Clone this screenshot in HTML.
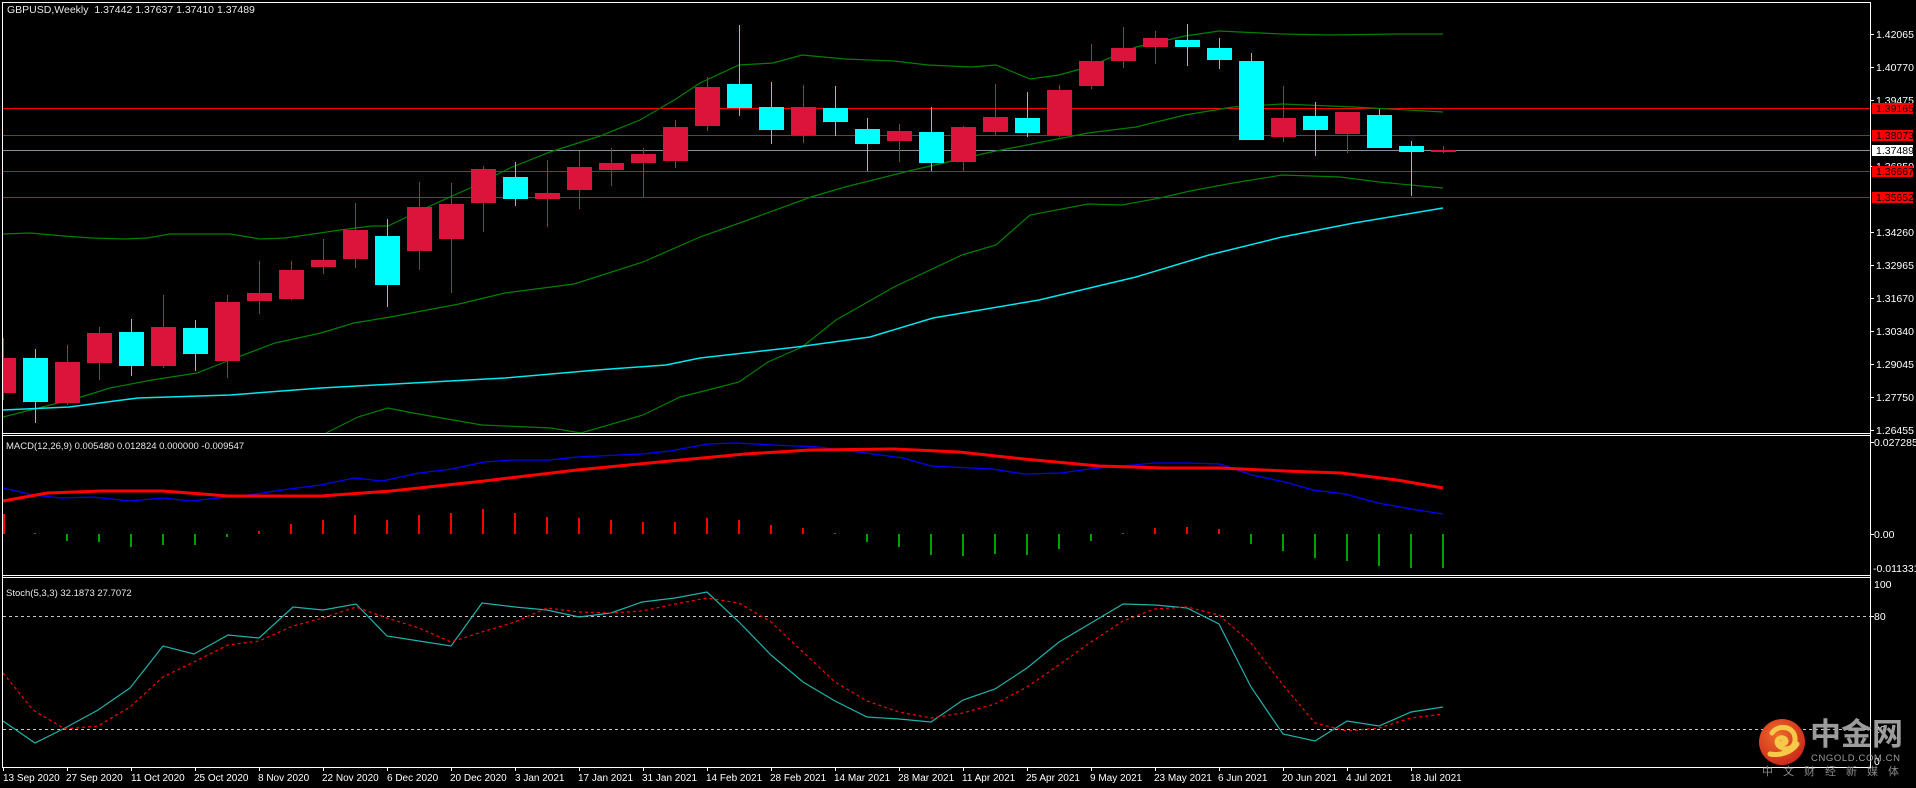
<!DOCTYPE html>
<html><head><meta charset="utf-8"><style>
html,body{margin:0;padding:0;background:#000;width:1916px;height:788px;overflow:hidden}
svg{display:block}
text{font-family:"Liberation Sans","Noto Sans CJK SC",sans-serif}
</style></head><body>
<svg width="1916" height="788" viewBox="0 0 1916 788" xmlns="http://www.w3.org/2000/svg">
<rect width="1916" height="788" fill="#000"/>
<defs>
<clipPath id="cm"><rect x="3" y="3" width="1867" height="430"/></clipPath>
<clipPath id="cs"><rect x="3" y="578" width="1867" height="189"/></clipPath>
<radialGradient id="lg" cx="0.4" cy="0.35" r="0.7"><stop offset="0" stop-color="#f06a2a"/><stop offset="1" stop-color="#c8281a"/></radialGradient>
</defs>
<!-- panel borders -->
<g fill="none" stroke="#fff" stroke-width="1" shape-rendering="crispEdges">
<line x1="2" y1="2.5" x2="1871" y2="2.5"/>
<line x1="2.5" y1="2" x2="2.5" y2="768"/>
<line x1="1870.5" y1="2" x2="1870.5" y2="768"/>
<line x1="2" y1="433.5" x2="1871" y2="433.5"/>
<line x1="2" y1="435.5" x2="1871" y2="435.5"/>
<line x1="2" y1="575.5" x2="1871" y2="575.5"/>
<line x1="2" y1="577.5" x2="1871" y2="577.5"/>
<line x1="2" y1="767.5" x2="1871" y2="767.5"/>
</g>
<!-- main chart -->
<g clip-path="url(#cm)">
<g shape-rendering="crispEdges">
<line x1="3" y1="108.5" x2="1870" y2="108.5" stroke="#ff0000"/>
<line x1="3" y1="135.5" x2="1870" y2="135.5" stroke="#ff0000"/>
<line x1="3" y1="150.5" x2="1870" y2="150.5" stroke="#8090a0"/>
<line x1="3" y1="171.5" x2="1870" y2="171.5" stroke="#ff0000"/>
<line x1="3" y1="197.5" x2="1870" y2="197.5" stroke="#ff0000"/>
</g>
<g fill="none" stroke="#008000" stroke-width="1.2">
<polyline points="3,234 30,233 64,236 92,238 125,239 147,238 170,234 230,234 260,239 285,238 320,233 340,230 372,226 388,226 430,206 470,188 510,168 550,152 600,136 640,120 676,99 700,83 739,65 773,63 802,55 845,59 894,61 928,65 971,67 996,65 1030,79 1059,75 1088,67 1136,47 1185,36 1219,31 1282,34 1330,35 1398,34 1443,34"/>
<polyline points="3,417 78,398 110,388 152,380 197,373 230,360 275,343 321,333 354,323 390,317 459,304 505,293 574,284 643,262 700,237 748,220 811,197 845,187 913,170 991,152 1088,133 1136,127 1185,115 1233,107 1282,104 1354,107 1443,112"/>
<polyline points="326,433 358,417 388,408 413,413 482,425 551,428 581,433 643,415 680,397 700,392 739,382 768,362 802,347 836,320 894,287 962,255 996,245 1030,215 1088,204 1122,205 1160,198 1190,191 1233,183 1282,175 1340,177 1379,182 1443,188"/>
</g>
<polyline fill="none" stroke="#00e8f0" stroke-width="1.5" points="3,410 69,407 138,398 230,395 321,388 413,383 505,378 597,370 666,365 700,358 797,347 870,337 933,318 1039,300 1136,277 1209,255 1282,237 1354,223 1443,208"/>
<g shape-rendering="crispEdges" id="candles"></g>
</g>
<!-- candles -->
<g shape-rendering="crispEdges" clip-path="url(#cm)">
<g fill="#dc143c">
<rect x="3" y="338" width="1" height="62"/><rect x="-9" y="358" width="25" height="35"/>
<rect x="67" y="345" width="1" height="60"/><rect x="55" y="362" width="25" height="41"/>
<rect x="99" y="327" width="1" height="53"/><rect x="87" y="333" width="25" height="30"/>
<rect x="163" y="295" width="1" height="73"/><rect x="151" y="327" width="25" height="39"/>
<rect x="227" y="295" width="1" height="83"/><rect x="215" y="302" width="25" height="59"/>
<rect x="259" y="261" width="1" height="53"/><rect x="247" y="293" width="25" height="8"/>
<rect x="291" y="261" width="1" height="39"/><rect x="279" y="270" width="25" height="29"/>
<rect x="323" y="239" width="1" height="35"/><rect x="311" y="260" width="25" height="7"/>
<rect x="355" y="203" width="1" height="65"/><rect x="343" y="230" width="25" height="29"/>
<rect x="419" y="182" width="1" height="88"/><rect x="407" y="207" width="25" height="44"/>
<rect x="451" y="183" width="1" height="110"/><rect x="439" y="204" width="25" height="35"/>
<rect x="483" y="166" width="1" height="66"/><rect x="471" y="169" width="25" height="34"/>
<rect x="547" y="160" width="1" height="67"/><rect x="535" y="193" width="25" height="6"/>
<rect x="579" y="151" width="1" height="58"/><rect x="567" y="167" width="25" height="23"/>
<rect x="611" y="148" width="1" height="38"/><rect x="599" y="163" width="25" height="7"/>
<rect x="643" y="148" width="1" height="49"/><rect x="631" y="154" width="25" height="9"/>
<rect x="675" y="120" width="1" height="48"/><rect x="663" y="127" width="25" height="34"/>
<rect x="707" y="77" width="1" height="54"/><rect x="695" y="87" width="25" height="39"/>
<rect x="803" y="85" width="1" height="58"/><rect x="791" y="107" width="25" height="28"/>
<rect x="899" y="124" width="1" height="38"/><rect x="887" y="131" width="25" height="10"/>
<rect x="963" y="126" width="1" height="45"/><rect x="951" y="127" width="25" height="35"/>
<rect x="995" y="84" width="1" height="51"/><rect x="983" y="117" width="25" height="15"/>
<rect x="1059" y="85" width="1" height="52"/><rect x="1047" y="90" width="25" height="45"/>
<rect x="1091" y="44" width="1" height="45"/><rect x="1079" y="61" width="25" height="25"/>
<rect x="1123" y="27" width="1" height="41"/><rect x="1111" y="48" width="25" height="13"/>
<rect x="1155" y="31" width="1" height="33"/><rect x="1143" y="38" width="25" height="9"/>
<rect x="1283" y="86" width="1" height="56"/><rect x="1271" y="118" width="25" height="19"/>
<rect x="1347" y="112" width="1" height="41"/><rect x="1335" y="112" width="25" height="22"/>
<rect x="1443" y="146" width="1" height="7"/><rect x="1431" y="150" width="25" height="2"/>
</g>
<g fill="#00ffff">
<rect x="35" y="349" width="1" height="74"/><rect x="23" y="358" width="25" height="44"/>
<rect x="131" y="319" width="1" height="57"/><rect x="119" y="332" width="25" height="34"/>
<rect x="195" y="320" width="1" height="51"/><rect x="183" y="328" width="25" height="26"/>
<rect x="387" y="219" width="1" height="88"/><rect x="375" y="236" width="25" height="49"/>
<rect x="515" y="162" width="1" height="44"/><rect x="503" y="177" width="25" height="22"/>
<rect x="739" y="25" width="1" height="91"/><rect x="727" y="84" width="25" height="24"/>
<rect x="771" y="82" width="1" height="62"/><rect x="759" y="107" width="25" height="23"/>
<rect x="835" y="86" width="1" height="50"/><rect x="823" y="108" width="25" height="14"/>
<rect x="867" y="118" width="1" height="53"/><rect x="855" y="129" width="25" height="15"/>
<rect x="931" y="107" width="1" height="64"/><rect x="919" y="132" width="25" height="31"/>
<rect x="1027" y="92" width="1" height="45"/><rect x="1015" y="118" width="25" height="15"/>
<rect x="1187" y="24" width="1" height="42"/><rect x="1175" y="40" width="25" height="7"/>
<rect x="1219" y="38" width="1" height="31"/><rect x="1207" y="48" width="25" height="12"/>
<rect x="1251" y="53" width="1" height="87"/><rect x="1239" y="61" width="25" height="79"/>
<rect x="1315" y="102" width="1" height="54"/><rect x="1303" y="116" width="25" height="14"/>
<rect x="1379" y="109" width="1" height="39"/><rect x="1367" y="115" width="25" height="33"/>
<rect x="1411" y="141" width="1" height="55"/><rect x="1399" y="146" width="25" height="6"/>
</g>
</g>
<text x="7" y="13" font-size="10.5" fill="#e8e8e8">GBPUSD,Weekly&#160;&#160;1.37442 1.37637 1.37410 1.37489</text>
<!-- right price scale -->
<g font-size="10.5" fill="#ffffff" shape-rendering="crispEdges">
<g stroke="#fff"><line x1="1871" y1="34.5" x2="1874" y2="34.5"/><line x1="1871" y1="67.5" x2="1874" y2="67.5"/><line x1="1871" y1="100.5" x2="1874" y2="100.5"/><line x1="1871" y1="166.5" x2="1874" y2="166.5"/><line x1="1871" y1="232.5" x2="1874" y2="232.5"/><line x1="1871" y1="265.5" x2="1874" y2="265.5"/><line x1="1871" y1="298.5" x2="1874" y2="298.5"/><line x1="1871" y1="331.5" x2="1874" y2="331.5"/><line x1="1871" y1="364.5" x2="1874" y2="364.5"/><line x1="1871" y1="397.5" x2="1874" y2="397.5"/><line x1="1871" y1="430.5" x2="1874" y2="430.5"/>
<line x1="1871" y1="442.5" x2="1874" y2="442.5"/><line x1="1871" y1="534.5" x2="1874" y2="534.5"/><line x1="1871" y1="616.5" x2="1874" y2="616.5"/></g>
<text x="1876" y="38">1.42065</text>
<text x="1876" y="71">1.40770</text>
<text x="1876" y="104">1.39475</text>
<text x="1876" y="170">1.36850</text>
<text x="1876" y="236">1.34260</text>
<text x="1876" y="269">1.32965</text>
<text x="1876" y="302">1.31670</text>
<text x="1876" y="335">1.30340</text>
<text x="1876" y="368">1.29045</text>
<text x="1876" y="401">1.27750</text>
<text x="1876" y="434">1.26455</text>
<rect x="1872" y="103" width="41" height="11" fill="#ff0000"/><text x="1876" y="112" fill="#000">1.39165</text>
<rect x="1872" y="130" width="41" height="11" fill="#ff0000"/><text x="1876" y="139" fill="#000">1.38073</text>
<rect x="1872" y="145" width="41" height="11" fill="#ffffff"/><text x="1876" y="154" fill="#000">1.37489</text>
<rect x="1872" y="166" width="41" height="11" fill="#ff0000"/><text x="1876" y="175" fill="#000">1.36667</text>
<rect x="1872" y="192" width="41" height="11" fill="#ff0000"/><text x="1876" y="201" fill="#000">1.35652</text>
<text x="1874" y="446">0.027285</text>
<text x="1874" y="538">0.00</text>
<text x="1873" y="572">-0.011331</text>
<text x="1874" y="588">100</text>
<text x="1874" y="620">80</text>
<text x="1874" y="733">20</text>
<text x="1874" y="765">0</text>
</g>
<!-- MACD -->
<text x="6" y="449" font-size="9.5" fill="#e8e8e8">MACD(12,26,9) 0.005480 0.012824 0.000000 -0.009547</text>
<g shape-rendering="crispEdges" stroke-width="2">
<g stroke="#ff0000">
<line x1="4" y1="534" x2="4" y2="514"/><line x1="35" y1="534" x2="35" y2="533"/>
<line x1="259" y1="534" x2="259" y2="531"/><line x1="291" y1="534" x2="291" y2="524"/><line x1="323" y1="534" x2="323" y2="520"/><line x1="355" y1="534" x2="355" y2="515"/><line x1="387" y1="534" x2="387" y2="520"/><line x1="419" y1="534" x2="419" y2="515"/><line x1="451" y1="534" x2="451" y2="513"/><line x1="483" y1="534" x2="483" y2="509"/><line x1="515" y1="534" x2="515" y2="513"/><line x1="547" y1="534" x2="547" y2="517"/><line x1="579" y1="534" x2="579" y2="518"/><line x1="611" y1="534" x2="611" y2="520"/><line x1="643" y1="534" x2="643" y2="522"/><line x1="675" y1="534" x2="675" y2="522"/><line x1="707" y1="534" x2="707" y2="518"/><line x1="739" y1="534" x2="739" y2="520"/><line x1="771" y1="534" x2="771" y2="525"/><line x1="803" y1="534" x2="803" y2="528"/><line x1="835" y1="534" x2="835" y2="533"/>
<line x1="1123" y1="534" x2="1123" y2="533"/><line x1="1155" y1="534" x2="1155" y2="528"/><line x1="1187" y1="534" x2="1187" y2="527"/><line x1="1219" y1="534" x2="1219" y2="529"/>
</g>
<g stroke="#00a000">
<line x1="67" y1="534" x2="67" y2="541"/><line x1="99" y1="534" x2="99" y2="542"/><line x1="131" y1="534" x2="131" y2="547"/><line x1="163" y1="534" x2="163" y2="545"/><line x1="195" y1="534" x2="195" y2="545"/><line x1="227" y1="534" x2="227" y2="537"/>
<line x1="867" y1="534" x2="867" y2="542"/><line x1="899" y1="534" x2="899" y2="547"/><line x1="931" y1="534" x2="931" y2="555"/><line x1="963" y1="534" x2="963" y2="556"/><line x1="995" y1="534" x2="995" y2="554"/><line x1="1027" y1="534" x2="1027" y2="555"/><line x1="1059" y1="534" x2="1059" y2="549"/><line x1="1091" y1="534" x2="1091" y2="541"/>
<line x1="1251" y1="534" x2="1251" y2="544"/><line x1="1283" y1="534" x2="1283" y2="551"/><line x1="1315" y1="534" x2="1315" y2="558"/><line x1="1347" y1="534" x2="1347" y2="561"/><line x1="1379" y1="534" x2="1379" y2="566"/><line x1="1411" y1="534" x2="1411" y2="568"/><line x1="1443" y1="534" x2="1443" y2="568"/>
</g>
</g>
<polyline fill="none" stroke="#0000ff" stroke-width="1.3" points="3,488 33,495 61,498 93,497 130,501 163,498 191,501 228,497 256,494 289,489 321,485 354,478 382,481 419,473 452,469 484,462 512,460 549,460 577,457 642,454 670,451 708,444 736,443 773,445 819,447 866,453 903,458 931,466 992,469 1024,474 1061,473 1089,469 1122,466 1155,463 1187,463 1220,464 1252,475 1285,482 1313,490 1345,494 1378,503 1411,509 1443,514"/>
<polyline fill="none" stroke="#ff0000" stroke-width="3" points="3,501 47,493 102,491 163,491 228,496 321,496 391,491 484,481 577,470 670,461 745,454 810,450 894,449 959,452 1024,459 1099,466 1164,468 1220,468 1285,471 1341,473 1397,480 1443,488"/>
<!-- Stoch -->
<text x="6" y="596" font-size="9.5" fill="#e8e8e8">Stoch(5,3,3) 32.1873 27.7072</text>
<g stroke="#c8c8c8" stroke-dasharray="3,3" shape-rendering="crispEdges">
<line x1="3" y1="616.5" x2="1870" y2="616.5"/><line x1="3" y1="729.5" x2="1870" y2="729.5"/>
</g>
<g clip-path="url(#cs)">
<polyline fill="none" stroke="#20b2aa" stroke-width="1.2" points="3,721 35,743 65,728 98,710 130,688 163,646 194,654 228,635 259,638 293,607 323,610 356,604 387,636 419,641 451,646 482,603 515,607 547,610 579,617 611,613 642,602 675,598 707,592 739,622 771,655 803,682 835,701 867,717 899,719 931,722 963,700 995,689 1027,668 1059,642 1091,623 1123,604 1155,605 1187,608 1219,624 1251,687 1283,734 1315,741 1347,721 1379,726 1411,712 1443,707"/>
<polyline fill="none" stroke="#ff0000" stroke-width="1.2" stroke-dasharray="3,3" points="3,673 33,710 65,729 98,726 130,707 163,677 194,662 228,645 259,641 293,626 323,618 356,607 387,618 419,628 451,642 482,632 515,622 547,608 579,612 611,613 642,611 675,604 707,598 739,603 771,622 803,652 835,682 867,701 899,712 931,718 963,713 995,704 1027,687 1059,665 1091,642 1123,621 1155,609 1187,607 1219,615 1251,643 1283,685 1315,723 1347,731 1379,728 1411,718 1443,714"/>
</g>
<!-- date axis -->
<g font-size="10" fill="#ffffff">
<g stroke="#fff" shape-rendering="crispEdges">
<line x1="3.5" y1="768" x2="3.5" y2="771"/><line x1="67.5" y1="768" x2="67.5" y2="771"/><line x1="131.5" y1="768" x2="131.5" y2="771"/><line x1="195.5" y1="768" x2="195.5" y2="771"/><line x1="259.5" y1="768" x2="259.5" y2="771"/><line x1="323.5" y1="768" x2="323.5" y2="771"/><line x1="387.5" y1="768" x2="387.5" y2="771"/><line x1="451.5" y1="768" x2="451.5" y2="771"/><line x1="515.5" y1="768" x2="515.5" y2="771"/><line x1="579.5" y1="768" x2="579.5" y2="771"/><line x1="643.5" y1="768" x2="643.5" y2="771"/><line x1="707.5" y1="768" x2="707.5" y2="771"/><line x1="771.5" y1="768" x2="771.5" y2="771"/><line x1="835.5" y1="768" x2="835.5" y2="771"/><line x1="899.5" y1="768" x2="899.5" y2="771"/><line x1="963.5" y1="768" x2="963.5" y2="771"/><line x1="1027.5" y1="768" x2="1027.5" y2="771"/><line x1="1091.5" y1="768" x2="1091.5" y2="771"/><line x1="1155.5" y1="768" x2="1155.5" y2="771"/><line x1="1219.5" y1="768" x2="1219.5" y2="771"/><line x1="1283.5" y1="768" x2="1283.5" y2="771"/><line x1="1347.5" y1="768" x2="1347.5" y2="771"/><line x1="1411.5" y1="768" x2="1411.5" y2="771"/>
</g>
<text x="3" y="781">13 Sep 2020</text><text x="66" y="781">27 Sep 2020</text><text x="131" y="781">11 Oct 2020</text><text x="194" y="781">25 Oct 2020</text><text x="258" y="781">8 Nov 2020</text><text x="322" y="781">22 Nov 2020</text><text x="387" y="781">6 Dec 2020</text><text x="450" y="781">20 Dec 2020</text><text x="515" y="781">3 Jan 2021</text><text x="578" y="781">17 Jan 2021</text><text x="642" y="781">31 Jan 2021</text><text x="706" y="781">14 Feb 2021</text><text x="770" y="781">28 Feb 2021</text><text x="834" y="781">14 Mar 2021</text><text x="898" y="781">28 Mar 2021</text><text x="962" y="781">11 Apr 2021</text><text x="1026" y="781">25 Apr 2021</text><text x="1090" y="781">9 May 2021</text><text x="1154" y="781">23 May 2021</text><text x="1218" y="781">6 Jun 2021</text><text x="1282" y="781">20 Jun 2021</text><text x="1346" y="781">4 Jul 2021</text><text x="1410" y="781">18 Jul 2021</text>
</g>
<!-- logo -->
<circle cx="1782" cy="742" r="23" fill="url(#lg)"/>
<path d="M1772,733 C1778,724 1794,726 1795,738 C1796,748 1786,752 1779,746 C1774,741 1780,735 1785,739 C1788,742 1784,745 1782,743 M1770,754 C1780,756 1792,752 1797,744" fill="none" stroke="#f7c94a" stroke-width="5" stroke-linecap="round"/>
<text x="1810" y="745" font-size="31" font-weight="bold" fill="#9c9c9c" font-family="'Noto Sans CJK SC',sans-serif">中金网</text>
<text x="1811" y="761" font-size="9.5" fill="#9c9c9c" letter-spacing="0.6">CNGOLD.COM.CN</text>
<text x="1762" y="775" font-size="11" fill="#8a8a8a" letter-spacing="10" font-family="'Noto Sans CJK SC',sans-serif">中文财经新媒体</text>
</svg>
</body></html>
